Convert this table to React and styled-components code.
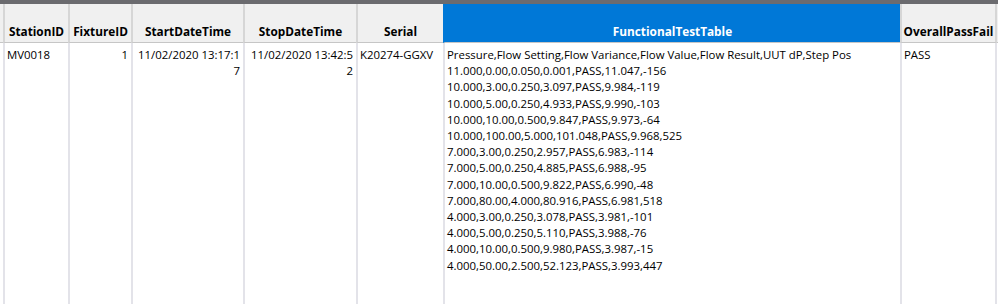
import React from "react";
import styled, { createGlobalStyle } from "styled-components";

const Global = createGlobalStyle`
  html, body { margin: 0; padding: 0; background: #ffffff; }
  body { font-family: "Open Sans", "Noto Sans", sans-serif; overflow: hidden; }
`;

const columns = [
  { key: "station", title: "StationID", width: 65, align: "left" },
  { key: "fixture", title: "FixtureID", width: 63, align: "right" },
  { key: "start", title: "StartDateTime", width: 112, align: "right" },
  { key: "stop", title: "StopDateTime", width: 113, align: "right" },
  { key: "serial", title: "Serial", width: 87, align: "left" },
  { key: "ftt", title: "FunctionalTestTable", width: 457, align: "left", selected: true },
  { key: "overall", title: "OverallPassFail", width: 97, align: "left" },
];

const fttLines = [
  "Pressure,Flow Setting,Flow Variance,Flow Value,Flow Result,UUT dP,Step Pos",
  "11.000,0.00,0.050,0.001,PASS,11.047,-156",
  "10.000,3.00,0.250,3.097,PASS,9.984,-119",
  "10.000,5.00,0.250,4.933,PASS,9.990,-103",
  "10.000,10.00,0.500,9.847,PASS,9.973,-64",
  "10.000,100.00,5.000,101.048,PASS,9.968,525",
  "7.000,3.00,0.250,2.957,PASS,6.983,-114",
  "7.000,5.00,0.250,4.885,PASS,6.988,-95",
  "7.000,10.00,0.500,9.822,PASS,6.990,-48",
  "7.000,80.00,4.000,80.916,PASS,6.981,518",
  "4.000,3.00,0.250,3.078,PASS,3.981,-101",
  "4.000,5.00,0.250,5.110,PASS,3.988,-76",
  "4.000,10.00,0.500,9.980,PASS,3.987,-15",
  "4.000,50.00,2.500,52.123,PASS,3.993,447",
];

const row = {
  station: "MV0018",
  fixture: "1",
  start: "11/02/2020 13:17:1\n7",
  stop: "11/02/2020 13:42:5\n2",
  serial: "K20274-GGXV",
  ftt: fttLines.join("\n"),
  overall: "PASS",
};

const Page = styled.div`
  width: 998px;
  height: 304px;
  display: flex;
  flex-direction: column;
  background: #ffffff;
`;

const TopBar = styled.div`
  height: 4px;
  background: #6b6b6f;
  flex: none;
`;

const Table = styled.div`
  display: grid;
  grid-template-columns: 3px ${columns.map((c) => c.width + "px").join(" ")} 1fr;
  grid-template-rows: 39px 1fr;
  flex: 1;
`;

const Gutter = styled.div`
  background: ${(p) => (p.$head ? "#f0f0f0" : "#ffffff")};
  border-bottom: ${(p) => (p.$head ? "1px solid #c6c6c6" : "none")};
`;

const HeaderCell = styled.div`
  display: flex;
  align-items: flex-end;
  justify-content: center;
  padding: 0 2px 3px;
  background: ${(p) => (p.$selected ? "#0078d7" : "#f0f0f0")};
  color: ${(p) => (p.$selected ? "#ffffff" : "#000000")};
  border-left: 2px solid ${(p) => (p.$selected ? "#0078d7" : "#d6d6d6")};
  border-bottom: 1px solid #c6c6c6;
  font-weight: 700;
  font-size: 11.8px;
  line-height: 16px;
  white-space: nowrap;
  overflow: hidden;
  ${(p) => p.$last && "border-right: 2px solid #d6d6d6;"}
`;

const DataCell = styled.div`
  padding: 4px 3px 0 2px;
  border-left: 2px solid #e3e3e9;
  font-size: 11.4px;
  line-height: 16.2px;
  color: #000000;
  text-align: ${(p) => p.$align};
  white-space: pre;
  overflow: hidden;
  ${(p) => p.$last && "border-right: 2px solid #e3e3e9;"}
`;

export default function App() {
  return (
    <>
      <Global />
      <Page>
        <TopBar />
        <Table>
          <Gutter $head />
          {columns.map((c, i) => (
            <HeaderCell key={c.key} $selected={c.selected} $last={i === columns.length - 1}>
              {c.title}
            </HeaderCell>
          ))}
          <Gutter $head />
          <Gutter />
          {columns.map((c, i) => (
            <DataCell key={c.key} $align={c.align} $last={i === columns.length - 1}>
              {row[c.key]}
            </DataCell>
          ))}
          <Gutter />
        </Table>
      </Page>
    </>
  );
}
